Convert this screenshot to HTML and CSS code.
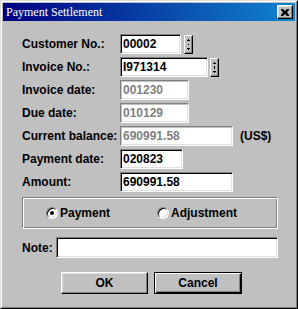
FILE: index.html
```html
<!DOCTYPE html>
<html lang="en">
<head>
    <meta charset="UTF-8">
    <title>Payment Settlement</title>
    <link rel="stylesheet" href="styles.css">
</head>
<body>
    <div class="window">
        <div class="frame">
            <div class="titlebar">
                <span class="title">Payment Settlement</span>
                <div class="close-btn">
                    <svg width="8" height="7" viewBox="0 0 8 7">
                        <path d="M0 0h2l2 2 2-2h2v1L6 3.5 8 6v1H6L4 5 2 7H0V6l2-2.5L0 1z" fill="#000"/>
                    </svg>
                </div>
            </div>

            <div class="client">
                <div class="form-grid">
                    <div class="label">Customer No.:</div>
                    <div class="cell">
                        <div class="field w60">00002</div>
                        <div class="spin spin-gap">
                            <svg width="5" height="15" viewBox="0 0 5 15">
                                <path d="M2 2h1v1h1v1H1V3h1z M2 7h1v1H2z M1 11h3v1H3v1H2v-1H1z" fill="#000"/>
                            </svg>
                        </div>
                    </div>

                    <div class="label">Invoice No.:</div>
                    <div class="cell">
                        <div class="field w87">I971314</div>
                        <div class="spin focus">
                            <svg width="5" height="15" viewBox="0 0 5 15">
                                <path d="M2 2h1v1h1v1H1V3h1z M2 7h1v1H2z M1 11h3v1H3v1H2v-1H1z" fill="#000"/>
                            </svg>
                        </div>
                    </div>

                    <div class="label">Invoice date:</div>
                    <div class="cell">
                        <div class="field disabled w69">001230</div>
                    </div>

                    <div class="label">Due date:</div>
                    <div class="cell">
                        <div class="field disabled w69">010129</div>
                    </div>

                    <div class="label">Current balance:</div>
                    <div class="cell">
                        <div class="field disabled w113">690991.58</div>
                        <span class="unit">(US$)</span>
                    </div>

                    <div class="label">Payment date:</div>
                    <div class="cell">
                        <div class="field w63">020823</div>
                    </div>

                    <div class="label">Amount:</div>
                    <div class="cell">
                        <div class="field w113">690991.58</div>
                    </div>
                </div>

                <div class="group">
                    <div class="radio-item radio-payment">
                        <span class="radio checked"></span>
                        <span>Payment</span>
                    </div>
                    <div class="radio-item">
                        <span class="radio"></span>
                        <span>Adjustment</span>
                    </div>
                </div>

                <div class="note-row">
                    <div class="label">Note:</div>
                    <div class="field note"></div>
                </div>

                <div class="buttons">
                    <div class="btn">OK</div>
                    <div class="btn default">Cancel</div>
                </div>
            </div>
        </div>
    </div>
</body>
</html>
```

FILE: styles.css
```css
body {
    margin: 0;
    background-color: #c0c0c0;
    font-family: "Liberation Sans", Arial, sans-serif;
    font-size: 12px;
    font-weight: bold;
    color: #000;
}
.window {
    width: 298px;
    height: 309px;
    box-sizing: border-box;
    border: 1px solid;
    border-color: #dfdfdf #000 #000 #dfdfdf;
    background-color: #c0c0c0;
}
.frame {
    height: 100%;
    box-sizing: border-box;
    border: 1px solid;
    border-color: #fff #808080 #808080 #fff;
    padding: 1px;
}
.titlebar {
    height: 18px;
    display: flex;
    align-items: center;
    justify-content: space-between;
    padding: 0 2px 0 3px;
    background: linear-gradient(to right, #000080, #1084d0);
}
.title {
    color: #fff;
    font-family: "Liberation Serif", "Times New Roman", serif;
    font-weight: normal;
    font-size: 12px;
}
.close-btn {
    width: 16px;
    height: 14px;
    box-sizing: border-box;
    display: flex;
    align-items: center;
    justify-content: center;
    background-color: #c0c0c0;
    border: 1px solid;
    border-color: #fff #000 #000 #fff;
    box-shadow: inset -1px -1px #808080, inset 1px 1px #dfdfdf;
}
.client {
    padding: 13px 17px 0 19px;
}
.form-grid {
    display: grid;
    grid-template-columns: 98px auto;
    grid-auto-rows: 20px;
    row-gap: 3px;
}
.label {
    display: flex;
    align-items: center;
    white-space: nowrap;
}
.cell {
    display: flex;
    align-items: center;
    gap: 2px;
}
.field {
    height: 20px;
    box-sizing: border-box;
    padding-left: 2px;
    line-height: 16px;
    background-color: #fff;
    border: 1px solid;
    border-color: #808080 #fff #fff #808080;
    box-shadow: inset 1px 1px #000, inset -1px -1px #dfdfdf;
    padding-top: 1px;
}
.field.disabled {
    color: #808080;
    box-shadow: inset 1px 1px #c0c0c0, inset -1px -1px #dfdfdf;
}
.w60 { width: 61px; }
.w87 { width: 88px; }
.w69 { width: 69px; }
.w63 { width: 63px; }
.w113 { width: 113px; }
.spin {
    width: 9px;
    height: 19px;
    box-sizing: border-box;
    display: flex;
    align-items: center;
    justify-content: center;
    background-color: #c0c0c0;
    border: 1px solid;
    border-color: #fff #000 #000 #fff;
    box-shadow: inset -1px -1px #808080;
}
.spin-gap {
    margin-left: 1px;
}
.spin.focus {
    background-image: radial-gradient(#000 0.5px, transparent 0.6px);
}
.unit {
    margin-left: 5px;
}
.group {
    margin-top: 5px;
    height: 32px;
    box-sizing: border-box;
    border: 1px solid;
    border-color: #808080 #fff #fff #808080;
    box-shadow: inset 1px 1px #fff, inset -1px -1px #808080;
    display: flex;
    align-items: center;
    padding-left: 23px;
}
.radio-item {
    display: flex;
    align-items: center;
    gap: 2px;
}
.radio-payment {
    width: 111px;
}
.radio {
    width: 12px;
    height: 12px;
    box-sizing: border-box;
    border-radius: 50%;
    border: 1px solid;
    border-color: #808080 #fff #fff #808080;
    box-shadow: inset 1px 1px #000, inset -1px -1px #dfdfdf;
    background-color: #fff;
    display: flex;
    align-items: center;
    justify-content: center;
}
.radio.checked::after {
    content: "";
    width: 4px;
    height: 4px;
    border-radius: 50%;
    background-color: #000;
}
.note-row {
    display: flex;
    align-items: center;
    gap: 3px;
    margin-top: 8px;
}
.field.note {
    flex: 1;
    height: 21px;
}
.buttons {
    display: flex;
    gap: 6px;
    margin: 14px 0 0 39px;
}
.btn {
    width: 87px;
    height: 22px;
    box-sizing: border-box;
    display: flex;
    align-items: center;
    justify-content: center;
    border: 1px solid;
    border-color: #fff #000 #000 #fff;
    box-shadow: inset -1px -1px #808080, inset 1px 1px #dfdfdf;
}
.btn.default {
    width: 88px;
    border-color: #000;
    box-shadow: inset 1px 1px #fff, inset -1px -1px #000, inset -2px -2px #808080;
}
```
